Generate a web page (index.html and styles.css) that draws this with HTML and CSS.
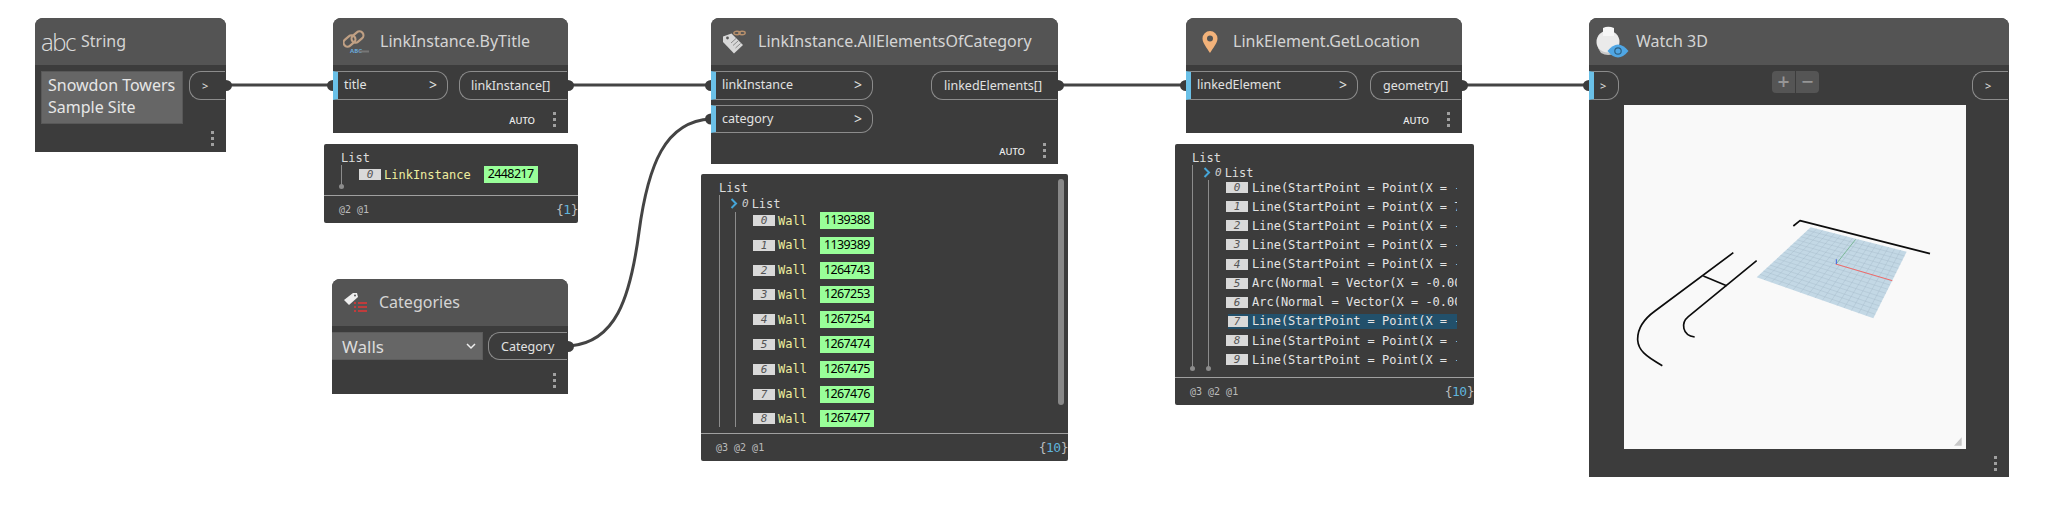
FILE: index.html
```html
<!DOCTYPE html>
<html lang="en">
<head>
    <meta charset="UTF-8">
    <title>Dynamo graph</title>
    <link rel="stylesheet" href="styles.css">
</head>
<body>
    <div class="graph">
        <!-- wires between the nodes -->
        <svg class="wires" width="2052" height="524" viewBox="0 0 2052 524">
            <path class="wire" d="M226 85H333M568 85H711M1058 85H1186M1462 85H1589"/>
            <path class="wire" d="M570 346C615 342 630 300 639 232C648 165 665 121 711 119"/>
            <path class="knob" d="M226 80a6 5.500 0 0 1 0 11zM333 80a6 5.500 0 0 0 0 11zM568 80a6 5.500 0 0 1 0 11zM711 80a6 5.500 0 0 0 0 11zM711 113.500a6 5.500 0 0 0 0 11zM568 341a6 5.500 0 0 1 0 11zM1058 80a6 5.500 0 0 1 0 11zM1186 80a6 5.500 0 0 0 0 11zM1462 80a6 5.500 0 0 1 0 11zM1589 80a6 5.500 0 0 0 0 11z"/>
        </svg>

        <section class="node node-string">
            <header class="node-head">
                <span class="abc-icon">abc</span>
                <h2 class="node-title">String</h2>
            </header>
            <div class="node-body">
                <div class="port-row">
                    <div class="string-box">Snowdon Towers<br>Sample Site</div>
                    <div class="port port-out port-small">&gt;</div>
                </div>
                <div class="node-foot"><span class="dots"></span></div>
            </div>
        </section>

        <section class="node node-bytitle">
            <header class="node-head">
                <svg class="node-icon" width="28" height="24" viewBox="0 0 28 24">
                    <g fill="none" stroke="#c0a084" stroke-width="2.200">
                        <rect x="0" y="7" width="13" height="8" rx="4" transform="rotate(-40 6.500 11)"/>
                        <rect x="8" y="3" width="13" height="8" rx="4" transform="rotate(-40 14.500 7)"/>
                    </g>
                    <text class="icon-abc" x="7" y="23">ABC</text>
                    <path d="M16 21.500h10" stroke="#777" stroke-width="2"/>
                </svg>
                <h2 class="node-title">LinkInstance.ByTitle</h2>
            </header>
            <div class="node-body">
                <div class="port-row">
                    <div class="port port-in port-title"><span>title</span><b>&gt;</b></div>
                    <div class="port port-out port-linkinstance">linkInstance[]</div>
                </div>
                <div class="node-foot"><span class="auto">AUTO</span><span class="dots"></span></div>
            </div>
        </section>

        <section class="preview preview-bytitle">
            <div class="preview-main">
                <div class="list-label">List</div>
                <div class="rail rail-end rail-single">
                    <div class="row">
                        <span class="tag">0</span>
                        <span class="value">LinkInstance</span>
                        <span class="element-id">2448217</span>
                    </div>
                </div>
            </div>
            <div class="preview-foot"><span>@2 @1</span><span class="count">{<i>1</i>}</span></div>
        </section>

        <section class="node node-categories">
            <header class="node-head">
                <svg class="node-icon" width="26" height="24" viewBox="0 0 26 24">
                    <path d="M1 9L10 2l4 0 1 4-9 8z" fill="#eee"/>
                    <circle cx="12" cy="4.500" r="1" fill="#555"/>
                    <path d="M11 11h2v2h-2zM15 11h9v2h-9zM11 15h2v2h-2zM15 15h9v2h-9zM11 19h2v2h-2zM15 19h9v2h-9z" fill="#c03c3c"/>
                </svg>
                <h2 class="node-title">Categories</h2>
            </header>
            <div class="node-body">
                <div class="port-row">
                    <div class="dropdown">
                        <span>Walls</span>
                        <svg width="10" height="7" viewBox="0 0 10 7"><path d="M1 1l4 4 4-4" fill="none" stroke="#eee" stroke-width="1.500"/></svg>
                    </div>
                    <div class="port port-out port-category">Category</div>
                </div>
                <div class="node-foot"><span class="dots"></span></div>
            </div>
        </section>

        <section class="node node-allelements">
            <header class="node-head">
                <svg class="node-icon" width="24" height="24" viewBox="0 0 24 24">
                    <path d="M0 6.500l8.500-3L20 15l-9 8.500L0 12z" fill="#d8d8d8"/>
                    <circle cx="4.500" cy="8" r="1.400" fill="#555"/>
                    <path d="M8 13l5-4.500M10 15.500l5-4.500M12.500 18l5-4.500" stroke="#8a8a8a" stroke-width="1"/>
                    <g fill="none" stroke="#b8906c" stroke-width="1.400">
                        <ellipse cx="14" cy="3" rx="3.200" ry="1.700"/>
                        <ellipse cx="19" cy="3" rx="3.200" ry="1.700"/>
                    </g>
                </svg>
                <h2 class="node-title">LinkInstance.AllElementsOfCategory</h2>
            </header>
            <div class="node-body">
                <div class="port-row">
                    <div class="port port-in port-wide"><span>linkInstance</span><b>&gt;</b></div>
                    <div class="port port-out port-linked">linkedElements[]</div>
                </div>
                <div class="port port-in port-wide port-second"><span>category</span><b>&gt;</b></div>
                <div class="node-foot"><span class="auto">AUTO</span><span class="dots"></span></div>
            </div>
        </section>

        <section class="preview preview-elements">
            <div class="preview-main">
                <div class="list-label">List</div>
                <div class="rail">
                    <div class="sub-list">
                        <svg class="chevron" width="8" height="11" viewBox="0 0 8 11"><path d="M1.500 1l4.500 4.500-4.500 4.500" fill="none" stroke="#45a5d8" stroke-width="2"/></svg>
                        <span class="tag-plain">0</span>
                        <span class="list-label">List</span>
                    </div>
                    <div class="rail rail-inner">
                        <div class="row"><span class="tag">0</span><span class="value">Wall</span><span class="element-id">1139388</span></div>
                        <div class="row"><span class="tag">1</span><span class="value">Wall</span><span class="element-id">1139389</span></div>
                        <div class="row"><span class="tag">2</span><span class="value">Wall</span><span class="element-id">1264743</span></div>
                        <div class="row"><span class="tag">3</span><span class="value">Wall</span><span class="element-id">1267253</span></div>
                        <div class="row"><span class="tag">4</span><span class="value">Wall</span><span class="element-id">1267254</span></div>
                        <div class="row"><span class="tag">5</span><span class="value">Wall</span><span class="element-id">1267474</span></div>
                        <div class="row"><span class="tag">6</span><span class="value">Wall</span><span class="element-id">1267475</span></div>
                        <div class="row"><span class="tag">7</span><span class="value">Wall</span><span class="element-id">1267476</span></div>
                        <div class="row"><span class="tag">8</span><span class="value">Wall</span><span class="element-id">1267477</span></div>
                    </div>
                </div>
            </div>
            <div class="scrollbar"></div>
            <div class="preview-foot"><span>@3 @2 @1</span><span class="count">{<i>10</i>}</span></div>
        </section>

        <section class="node node-location">
            <header class="node-head">
                <svg class="node-icon" width="16" height="22" viewBox="0 0 16 22">
                    <path fill-rule="evenodd" d="M8 0a7.500 7.500 0 0 1 7.500 7.500C15.500 12 11 17 8 22 5 17 .5 12 .5 7.500A7.500 7.500 0 0 1 8 0zm0 4.500a3 3 0 1 0 0 6 3 3 0 0 0 0-6z" fill="#f2b27a"/>
                </svg>
                <h2 class="node-title">LinkElement.GetLocation</h2>
            </header>
            <div class="node-body">
                <div class="port-row">
                    <div class="port port-in port-element"><span>linkedElement</span><b>&gt;</b></div>
                    <div class="port port-out port-geometry">geometry[]</div>
                </div>
                <div class="node-foot"><span class="auto">AUTO</span><span class="dots"></span></div>
            </div>
        </section>

        <section class="preview preview-location">
            <div class="preview-main">
                <div class="list-label">List</div>
                <div class="rail rail-end">
                    <div class="sub-list">
                        <svg class="chevron" width="8" height="11" viewBox="0 0 8 11"><path d="M1.500 1l4.500 4.500-4.500 4.500" fill="none" stroke="#45a5d8" stroke-width="2"/></svg>
                        <span class="tag-plain">0</span>
                        <span class="list-label">List</span>
                    </div>
                    <div class="rail rail-inner rail-end">
                        <div class="row"><span class="tag">0</span><span class="text">Line(StartPoint = Point(X = -</span></div>
                        <div class="row"><span class="tag">1</span><span class="text">Line(StartPoint = Point(X = 7</span></div>
                        <div class="row"><span class="tag">2</span><span class="text">Line(StartPoint = Point(X = -</span></div>
                        <div class="row"><span class="tag">3</span><span class="text">Line(StartPoint = Point(X = -</span></div>
                        <div class="row"><span class="tag">4</span><span class="text">Line(StartPoint = Point(X = -</span></div>
                        <div class="row"><span class="tag">5</span><span class="text">Arc(Normal = Vector(X = -0.00</span></div>
                        <div class="row"><span class="tag">6</span><span class="text">Arc(Normal = Vector(X = -0.00</span></div>
                        <div class="row row-selected"><span class="tag">7</span><span class="text">Line(StartPoint = Point(X = -</span></div>
                        <div class="row"><span class="tag">8</span><span class="text">Line(StartPoint = Point(X = -</span></div>
                        <div class="row"><span class="tag">9</span><span class="text">Line(StartPoint = Point(X = -</span></div>
                    </div>
                </div>
            </div>
            <div class="preview-foot"><span>@3 @2 @1</span><span class="count">{<i>10</i>}</span></div>
        </section>

        <section class="node node-watch">
            <header class="node-head">
                <svg class="node-icon" width="33" height="33" viewBox="0 0 33 33">
                    <circle cx="12" cy="17" r="11.500" fill="#eaeaea"/>
                    <path d="M7 3q5-2.500 11 0v8H7z" fill="#f6f6f6"/>
                    <path d="M2 23q10 9 20 0l-2 5q-8 4-15 0z" fill="#c8c8c8"/>
                    <path d="M11.500 26q10.500-13 21 0-10.500 13-21 0z" fill="#4fa6e4"/>
                    <circle cx="22" cy="26" r="3.200" fill="none" stroke="#2e5f80" stroke-width="1.200"/>
                </svg>
                <h2 class="node-title">Watch 3D</h2>
            </header>
            <div class="node-body">
                <div class="port-row">
                    <div class="port port-in port-watch-in">&gt;</div>
                    <div class="zoom-buttons"><span>+</span><span>&minus;</span></div>
                    <div class="port port-out port-small port-watch-out">&gt;</div>
                </div>
                <div class="viewport">
                    <svg width="342" height="344" viewBox="72 -285 1026 1032">
                        <polygon points="632,82 920,155 820,355 470,232" fill="#c3d8e5"/>
                        <path class="grid-lines" d="M650 87L492 240M668 91L514 247M686 96L536 255M704 100L557 263M722 105L579 270M740 109L601 278M758 114L623 286M776 118L645 294M794 123L667 301M812 128L689 309M830 132L711 317M848 137L732 324M866 141L754 332M884 146L776 340M902 150L798 347M622 91L914 168M612 101L908 180M602 110L901 193M592 120L895 205M581 129L889 218M571 138L883 230M561 148L876 243M551 157L870 255M541 166L864 268M531 176L858 280M521 185L851 293M510 195L845 305M500 204L839 318M490 213L833 330M480 223L826 343"/>
                        <path d="M707 192L877 242" stroke="#f06a6a" stroke-width="3" fill="none"/>
                        <path d="M710 190L767 118" stroke="#6fb28a" stroke-width="2.500" fill="none"/>
                        <path d="M709 192V178" stroke="#3b5fe0" stroke-width="3" fill="none"/>
                        <g class="geometry">
                            <path d="M400 158L165 333C125 362 112 392 113 420C115 450 135 468 187 497"/>
                            <path d="M470 182L265 350C243 368 245 405 284 411"/>
                            <path d="M310 228L380 257"/>
                            <path d="M580 78L600 62L990 161"/>
                        </g>
                        <polygon points="1085,712 1085,737 1062,737" fill="#c8c8c8"/>
                    </svg>
                </div>
                <div class="node-foot"><span class="dots"></span></div>
            </div>
        </section>
    </div>
</body>
</html>
```

FILE: styles.css
```css
body {
    margin: 0;
    background-color: #fff;
    font-family: "Open Sans", sans-serif;
}

.graph {
    position: relative;
    width: 2052px;
    height: 524px;
    overflow: hidden;
}

.wires {
    position: absolute;
    left: 0;
    top: 0;
}

.wire {
    fill: none;
    stroke: #444;
    stroke-width: 3;
}

.knob {
    fill: #3c3c3c;
}

/* nodes sit on a free canvas, so each one has its own place */
.node {
    position: absolute;
    display: flex;
    flex-direction: column;
    background-color: #3c3c3c;
    border-radius: 8px 8px 0 0;
    color: #e2e2e2;
}

.node-string { left: 35px; top: 18px; width: 191px; height: 134px; }
.node-bytitle { left: 333px; top: 18px; width: 235px; height: 115px; }
.node-categories { left: 332px; top: 279px; width: 236px; height: 115px; }
.node-allelements { left: 711px; top: 18px; width: 347px; height: 146px; }
.node-location { left: 1186px; top: 18px; width: 276px; height: 115px; }
.node-watch { left: 1589px; top: 18px; width: 420px; height: 459px; }

.node-head {
    display: flex;
    align-items: center;
    flex: none;
    height: 47px;
    background-color: #545454;
    border-radius: 8px 8px 0 0;
}

.node-title {
    margin: 0 0 2px;
    font-family: "Noto Sans", sans-serif;
    font-size: 16px;
    font-weight: 400;
    color: #d4d4d4;
    white-space: nowrap;
}

.node-string .node-head { padding-left: 6px; gap: 7px; }
.node-bytitle .node-head { padding-left: 10px; gap: 9px; }
.node-categories .node-head { padding-left: 11px; gap: 10px; }
.node-allelements .node-head { padding-left: 12px; gap: 11px; }
.node-location .node-head { padding-left: 16px; gap: 15px; }
.node-watch .node-head { padding-left: 7px; gap: 7px; }

.abc-icon {
    flex: none;
    width: 33px;
    font-family: "Open Sans", sans-serif;
    font-size: 24px;
    font-weight: 300;
    letter-spacing: -1.500px;
    color: #ddd;
}

.icon-abc {
    font-family: "Open Sans", sans-serif;
    font-size: 6px;
    font-weight: 700;
    fill: #6aa9d8;
}

.node-body {
    display: flex;
    flex-direction: column;
    flex: 1;
    padding-top: 6px;
}

.port-row {
    display: flex;
    justify-content: space-between;
    align-items: flex-start;
}

.port {
    display: flex;
    align-items: center;
    box-sizing: border-box;
    height: 29px;
    border: 1px solid #8c8c8c;
    font-family: "Noto Sans", sans-serif;
    font-size: 12.500px;
    color: #e2e2e2;
    white-space: nowrap;
}

.port-in {
    justify-content: space-between;
    padding: 0 10px 2px 6px;
    border-left: 5px solid #6ac0e7;
    border-radius: 0 12px 12px 0;
}

.port-in b {
    font-size: 14px;
    font-weight: 400;
}

.port-out {
    padding-left: 11px;
    border-right: none;
    border-radius: 12px 0 0 12px;
}

.port-title { width: 115px; }
.port-linkinstance { width: 108px; margin-right: 1px; }
.port-wide { width: 162px; }
.port-second { height: 28px; margin-top: 5px; }
.port-linked { width: 126px; margin-right: 1px; padding-left: 12px; }
.port-element { width: 172px; }
.port-geometry { width: 91px; margin-right: 1px; padding-left: 12px; }
.port-category { width: 79px; height: 28px; margin-right: 1px; padding-left: 12px; }

.port-small {
    width: 36px;
    margin-right: 1px;
    padding-left: 12px;
    font-size: 11px;
}

.port-watch-in {
    width: 30px;
    padding: 0 0 0 6px;
    justify-content: flex-start;
    font-size: 11px;
}

.port-watch-out { margin-left: auto; }

.string-box {
    box-sizing: border-box;
    width: 142px;
    height: 53px;
    margin-left: 6px;
    padding: 2px 6px;
    background-color: #666;
    border: 1px solid #585858;
    font-family: "Noto Sans", sans-serif;
    font-size: 16px;
    line-height: 22px;
    color: #e6e6e6;
    white-space: nowrap;
}

.dropdown {
    display: flex;
    justify-content: space-between;
    align-items: center;
    box-sizing: border-box;
    width: 151px;
    height: 28px;
    padding: 0 6px 0 10px;
    background-color: #666;
    border: 1px solid #5c5c5c;
    border-left: none;
    font-family: "Noto Sans", sans-serif;
    font-size: 17px;
    color: #dcdcdc;
}

.node-foot {
    display: flex;
    justify-content: flex-end;
    align-items: center;
    flex: none;
    gap: 18px;
    height: 26px;
    margin-top: auto;
    padding-right: 12px;
}

.auto {
    font-family: "Noto Sans", sans-serif;
    font-size: 9.500px;
    font-weight: 500;
    color: #eee;
}

.dots {
    width: 3px;
    height: 3px;
    margin-bottom: 13px;
    background-color: #a0a0a0;
    box-shadow: 0 6px #a0a0a0, 0 12px #a0a0a0;
}

/* watch 3D */
.zoom-buttons {
    display: flex;
    gap: 1px;
    height: 22px;
    margin-left: 153px;
    border-radius: 4px;
    overflow: hidden;
}

.zoom-buttons span {
    width: 23px;
    background-color: #555;
    font-size: 21px;
    font-weight: 600;
    line-height: 20px;
    text-align: center;
    color: #969696;
}

.viewport {
    width: 342px;
    height: 344px;
    margin: 5px 0 0 35px;
    background-color: #f9f9f9;
}

.viewport svg {
    display: block;
}

.grid-lines {
    fill: none;
    stroke: #9db4c3;
    stroke-width: 1;
}

.geometry path {
    fill: none;
    stroke: #0d0d0d;
    stroke-width: 5;
    stroke-linejoin: round;
}

/* preview bubbles below the nodes */
.preview {
    position: absolute;
    display: flex;
    flex-direction: column;
    background-color: #3c3c3c;
    border-radius: 2px;
    font-family: "DejaVu Sans Mono", monospace;
    font-size: 12px;
    color: #e2e2e2;
}

.preview-bytitle { left: 324px; top: 144px; width: 254px; height: 79px; }
.preview-elements { left: 701px; top: 174px; width: 367px; height: 287px; }
.preview-location { left: 1175px; top: 144px; width: 299px; height: 261px; }

.preview-main {
    flex: 1;
    min-height: 0;
    padding: 7px 0 0 17px;
    overflow: hidden;
}

.preview-elements .preview-main { padding-left: 18px; }

.list-label {
    height: 14px;
    line-height: 14px;
    color: #ddd;
}

.rail {
    position: relative;
    border-left: 1px solid #8c8c8c;
}

.rail-end::after {
    content: "";
    position: absolute;
    left: -3px;
    bottom: -2px;
    width: 5px;
    height: 5px;
    background-color: #8c8c8c;
    border-radius: 50%;
}

.rail-single {
    box-sizing: border-box;
    height: 22px;
    padding: 1px 0 0 17px;
}

.sub-list {
    display: flex;
    align-items: center;
    height: 17px;
    padding-left: 10px;
}

.preview-location .sub-list { height: 15px; }

.tag-plain {
    margin-left: 4px;
    font-size: 11px;
    font-style: italic;
    color: #ccc;
}

.sub-list .list-label { margin-left: 3px; }

.rail-inner {
    display: flex;
    flex-direction: column;
    gap: 7.800px;
    margin-left: 15px;
    padding-left: 17px;
}

.preview-location .rail-inner {
    gap: 4.150px;
    margin-left: 15px;
    padding: 0 0 2px 17px;
    width: 231px;
}

.row {
    display: flex;
    align-items: center;
    height: 17px;
    white-space: nowrap;
}

.preview-location .row {
    height: 15px;
    overflow: hidden;
}

.tag {
    flex: none;
    width: 22px;
    height: 11px;
    margin-right: 3px;
    background-color: #d9d9d9;
    font-size: 11px;
    font-style: italic;
    line-height: 11px;
    text-align: center;
    color: #555;
}

.value {
    color: #eeee9f;
}

.text {
    margin-left: 1px;
    color: #e4e4e4;
}

.row-selected {
    margin-left: 2px;
    background-color: #22506b;
}

.row-selected .tag {
    margin-left: -2px;
}

.element-id {
    flex: none;
    height: 17px;
    margin-left: 13px;
    padding: 0 4px;
    background-color: #99ff99;
    font-family: "Noto Sans", sans-serif;
    font-size: 12.500px;
    letter-spacing: -0.600px;
    line-height: 16px;
    color: #000;
}

.scrollbar {
    position: absolute;
    right: 4px;
    top: 5px;
    width: 6px;
    height: 226px;
    background-color: #888;
    border-radius: 3px;
}

.preview-foot {
    display: flex;
    justify-content: space-between;
    align-items: center;
    flex: none;
    box-sizing: border-box;
    height: 28px;
    padding-left: 15px;
    border-top: 1px solid #a0a0a0;
    font-size: 10px;
    color: #bbb;
}

.count {
    font-size: 13px;
    letter-spacing: -0.500px;
}

.count i {
    font-style: normal;
    color: #5fb4dc;
}
```
